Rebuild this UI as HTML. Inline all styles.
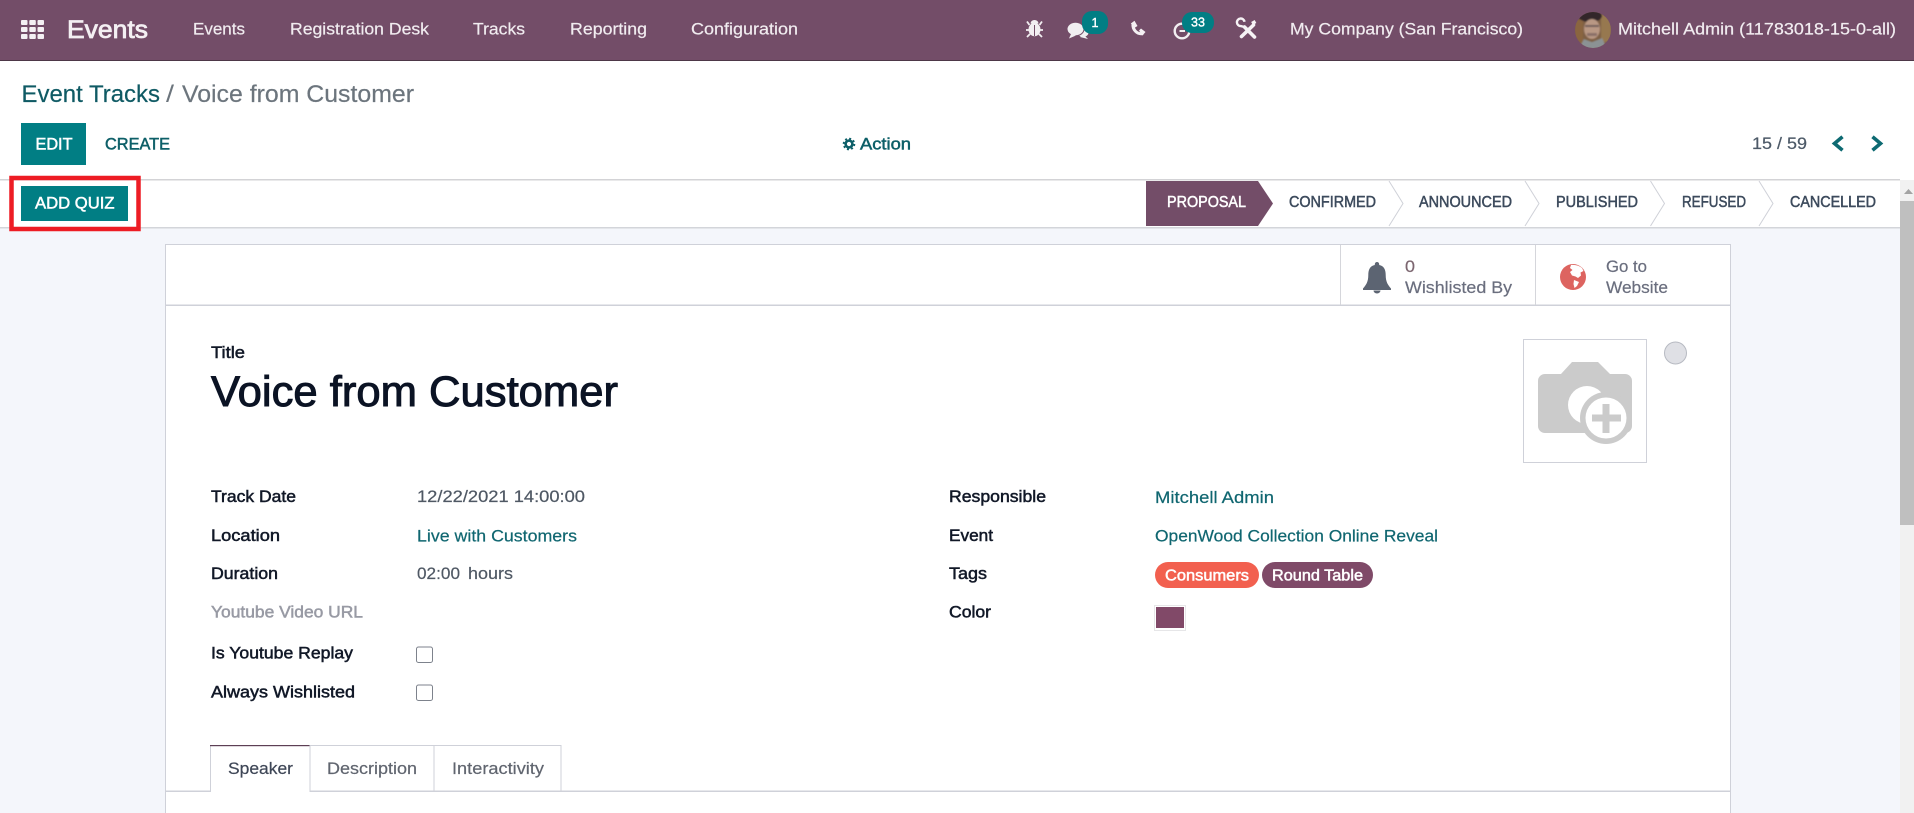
<!DOCTYPE html>
<html lang="en">
<head>
<meta charset="utf-8">
<title>Voice from Customer</title>
<style>
html,body{margin:0;padding:0;width:1914px;height:813px;overflow:hidden;background:#f4f6fb}
svg{display:block;position:absolute;left:0;top:0}
text{font-family:"Liberation Sans",Arial,sans-serif;font-size:16px;white-space:pre;paint-order:stroke}
.m{stroke-width:.5px}
.nav,.val,.lnk,.gr,.tab{stroke-width:.2px}
.nav{fill:#f1ecf0;stroke:#f1ecf0;font-size:16.5px}
.lb{fill:#111827;stroke:#111827;font-size:16.5px}
.val{fill:#4f5864;stroke:#4f5864;font-size:16.5px}
.lnk{fill:#0f6670;stroke:#0f6670;font-size:16.5px}
.st{fill:#3c4a5c;stroke:#3c4a5c;font-size:15.5px}
.gr{fill:#6a6e7e;stroke:#6a6e7e;font-size:17px}
.tab{fill:#60656f;stroke:#60656f;font-size:16.5px}
</style>
</head>
<body>
<svg width="1914" height="813" viewBox="0 0 1914 813" xmlns="http://www.w3.org/2000/svg">
<defs>
<clipPath id="av"><circle cx="1593" cy="30" r="18"/></clipPath>
<filter id="soft" x="-10%" y="-10%" width="120%" height="120%"><feGaussianBlur stdDeviation="0.9"/></filter>
</defs>
<!-- backgrounds -->
<rect x="0" y="0" width="1914" height="813" fill="#f4f6fb"/>
<rect x="0" y="61" width="1914" height="167" fill="#fff"/>
<rect x="0" y="0" width="1914" height="60" fill="#734d68"/>
<rect x="0" y="60" width="1914" height="1" fill="#4d3748"/>
<rect x="0" y="179" width="1900" height="1.5" fill="#d3d3d6"/>
<rect x="0" y="227" width="1900" height="1.5" fill="#d3d5da"/>

<!-- scrollbar -->
<rect x="1900" y="180" width="14" height="633" fill="#f1f1f1"/>
<rect x="1900" y="201" width="14" height="324" fill="#bfbfbf"/>
<path d="M1904 194 L1908.500 189 L1913 194 Z" fill="#a3a3a3"/>

<!-- navbar -->
<g fill="#f4f0f3">
<rect x="21" y="20" width="6.500" height="5" rx="1"/><rect x="29.300" y="20" width="6.500" height="5" rx="1"/><rect x="37.500" y="20" width="6.500" height="5" rx="1"/>
<rect x="21" y="27" width="6.500" height="5" rx="1"/><rect x="29.300" y="27" width="6.500" height="5" rx="1"/><rect x="37.500" y="27" width="6.500" height="5" rx="1"/>
<rect x="21" y="34" width="6.500" height="5" rx="1"/><rect x="29.300" y="34" width="6.500" height="5" rx="1"/><rect x="37.500" y="34" width="6.500" height="5" rx="1"/>
</g>
<text x="67" y="38" fill="#f4f0f3" stroke="#f4f0f3" stroke-width=".8" style="font-size:25px" textLength="81" lengthAdjust="spacingAndGlyphs">Events</text>
<text x="193" y="34.500" class="nav" textLength="52" lengthAdjust="spacingAndGlyphs">Events</text>
<text x="290" y="34.500" class="nav" textLength="139" lengthAdjust="spacingAndGlyphs">Registration Desk</text>
<text x="473" y="34.500" class="nav" textLength="52" lengthAdjust="spacingAndGlyphs">Tracks</text>
<text x="570" y="34.500" class="nav" textLength="77" lengthAdjust="spacingAndGlyphs">Reporting</text>
<text x="691" y="34.500" class="nav" textLength="107" lengthAdjust="spacingAndGlyphs">Configuration</text>

<!-- bug -->
<g fill="#f2eef1" stroke="#f2eef1">
<ellipse cx="1034.500" cy="29.500" rx="6" ry="6.800" stroke="none"/>
<path d="M1030.500 23.500 a4 3.500 0 0 1 8 0 Z" stroke="none"/>
<path d="M1029.500 25 L1027 21.500 M1039.500 25 L1042 21.500 M1029 30 H1026 M1040 30 H1043 M1030 34 L1027 37 M1039 34 L1042 37" stroke-width="1.800" fill="none"/>
<rect x="1034" y="25" width="1" height="11" fill="#734d68" stroke="none"/>
</g>
<!-- chat -->
<g fill="#f1eff1">
<ellipse cx="1083" cy="32.500" rx="5.500" ry="4.500"/>
<path d="M1084 35 L1088 39 L1080 37 Z"/>
<ellipse cx="1075.500" cy="29" rx="8.500" ry="6.800" stroke="#734d68" stroke-width="1"/>
<path d="M1071 34 L1069 38.500 L1076 35.500 Z"/>
</g>
<rect x="1082" y="11" width="26" height="23" rx="10" fill="#017e84"/>
<text x="1095" y="27" text-anchor="middle" fill="#fff" stroke="#fff" stroke-width=".4" style="font-size:12.500px">1</text>
<!-- phone -->
<path d="M1133 23.500 C1132.300 29.500 1137 34.800 1143 33.500" fill="none" stroke="#f4f0f3" stroke-width="3"/>
<path d="M1130.800 23.500 L1134.500 20.800 L1137.500 26 L1134.700 27.800 Z M1139 30.500 L1141 28.500 L1145.500 32 L1142.500 35.500 Z" fill="#f4f0f3"/>
<!-- activity clock -->
<circle cx="1182" cy="31" r="7.300" fill="none" stroke="#f2eef1" stroke-width="2.400"/>
<path d="M1179.500 31 H1185" stroke="#f2eef1" stroke-width="2"/>
<rect x="1182" y="12" width="32" height="21" rx="10" fill="#017e84"/>
<text x="1198" y="26.500" text-anchor="middle" fill="#fff" stroke="#fff" stroke-width=".4" style="font-size:12.500px">33</text>
<!-- tools -->
<g stroke="#f6f3f5" fill="none">
<path d="M1244.500 27 L1254.500 37" stroke-width="3.600" stroke-linecap="round"/>
<path d="M1253.500 25 L1241.500 36.500" stroke-width="3.600" stroke-linecap="round"/>
<path d="M1244.500 21.800 a3.800 3.800 0 1 0 -3.600 4.300 L1244.500 27" stroke-width="2.400"/>
<path d="M1252 23.500 L1255.500 21.500" stroke-width="3.400"/>
</g>
<text x="1290" y="34.500" class="nav" textLength="233" lengthAdjust="spacingAndGlyphs">My Company (San Francisco)</text>
<!-- avatar -->
<g clip-path="url(#av)">
<rect x="1575" y="12" width="36" height="36" fill="#7d5f45"/>
<g filter="url(#soft)">
<rect x="1601" y="14" width="10" height="28" fill="#97784f"/>
<rect x="1575" y="20" width="8" height="24" fill="#8a6541"/>
<ellipse cx="1590" cy="16" rx="12" ry="6" fill="#33262a"/>
<ellipse cx="1592" cy="29" rx="8" ry="10" fill="#b99884"/>
<rect x="1585" y="25" width="14" height="2" fill="#6d5a58"/>
<rect x="1587" y="33" width="10" height="3" fill="#8a6f68"/>
<path d="M1578 50 L1584 39 L1592 42 L1602 38 L1608 50 Z" fill="#8b9294"/>
</g>
</g>
<text x="1618" y="34.500" class="nav" textLength="278" lengthAdjust="spacingAndGlyphs">Mitchell Admin (11783018-15-0-all)</text>

<!-- breadcrumb -->
<text x="21.500" y="102" fill="#0f5a64" stroke="#0f5a64" stroke-width=".2" style="font-size:24px" textLength="138.500" lengthAdjust="spacingAndGlyphs">Event Tracks</text>
<text x="166" y="102" fill="#6c757d" style="font-size:24px" textLength="8" lengthAdjust="spacingAndGlyphs">/</text>
<text x="182" y="102" fill="#6c757d" stroke="#6c757d" stroke-width=".2" style="font-size:24px" textLength="232" lengthAdjust="spacingAndGlyphs">Voice from Customer</text>

<!-- control panel -->
<rect x="21" y="123" width="65" height="42" fill="#017e84"/>
<text x="35.500" y="149.500" fill="#fff" stroke="#fff" class="m" style="font-size:16.500px" textLength="37" lengthAdjust="spacingAndGlyphs">EDIT</text>
<text x="105" y="149.500" fill="#0d5f68" stroke="#0d5f68" class="m" style="font-size:16.500px" textLength="65" lengthAdjust="spacingAndGlyphs">CREATE</text>
<!-- gear -->
<circle cx="849" cy="144" r="3.400" fill="none" stroke="#0d5f68" stroke-width="2.600"/>
<circle cx="849" cy="144" r="5.400" fill="none" stroke="#0d5f68" stroke-width="1.800" stroke-dasharray="2 2.240"/>
<text x="860" y="149.500" fill="#0d5f68" stroke="#0d5f68" class="m" style="font-size:17px" textLength="51" lengthAdjust="spacingAndGlyphs">Action</text>
<text x="1752" y="149" fill="#4c5967" stroke="#4c5967" stroke-width=".2" style="font-size:16.500px" textLength="55" lengthAdjust="spacingAndGlyphs">15 / 59</text>
<path d="M1842.500 136.800 L1834.500 143.500 L1842.500 150.200" fill="none" stroke="#0d6a72" stroke-width="3.600"/>
<path d="M1872.500 136.800 L1880.500 143.500 L1872.500 150.200" fill="none" stroke="#0d6a72" stroke-width="3.600"/>

<!-- add quiz + red box -->
<rect x="21" y="186" width="107" height="35" fill="#017e84"/>
<text x="35" y="208.500" fill="#fff" stroke="#fff" class="m" style="font-size:16.500px" textLength="79.500" lengthAdjust="spacingAndGlyphs">ADD QUIZ</text>
<rect x="11.500" y="178" width="127" height="51" fill="none" stroke="#ed1c24" stroke-width="4.500"/>

<!-- statusbar -->
<path d="M1146 181 H1258 L1273 203.500 L1258 226 H1146 Z" fill="#734d68"/>
<text x="1167" y="207" fill="#fff" stroke="#fff" class="m" style="font-size:15.500px" textLength="79" lengthAdjust="spacingAndGlyphs">PROPOSAL</text>
<text x="1289" y="207" class="st m" textLength="87" lengthAdjust="spacingAndGlyphs">CONFIRMED</text>
<text x="1419" y="207" class="st m" textLength="93" lengthAdjust="spacingAndGlyphs">ANNOUNCED</text>
<text x="1556" y="207" class="st m" textLength="82" lengthAdjust="spacingAndGlyphs">PUBLISHED</text>
<text x="1682" y="207" class="st m" textLength="64" lengthAdjust="spacingAndGlyphs">REFUSED</text>
<text x="1790" y="207" class="st m" textLength="86" lengthAdjust="spacingAndGlyphs">CANCELLED</text>
<g fill="none" stroke="#cfd1d8" stroke-width="1">
<path d="M1389 181 L1403 203.500 L1389 226"/>
<path d="M1525 181 L1539 203.500 L1525 226"/>
<path d="M1650.500 181 L1664.500 203.500 L1650.500 226"/>
<path d="M1759 181 L1773 203.500 L1759 226"/>
</g>

<!-- sheet -->
<rect x="165.500" y="244.500" width="1565" height="580" fill="#fff" stroke="#cfd1d9" stroke-width="1"/>
<rect x="166" y="304.500" width="1564" height="1.500" fill="#cfd1d9"/>
<rect x="1340" y="245" width="1" height="60" fill="#d5d6db"/>
<rect x="1535" y="245" width="1" height="60" fill="#d5d6db"/>

<!-- bell -->
<path d="M1377 262 a2.200 2.200 0 0 1 2.200 2.200 v.8 c5 1 6.500 5 6.500 10 c0 7 2.300 10 5.300 13.500 v1.500 h-28 v-1.500 c3 -3.500 5.300 -6.500 5.300 -13.500 c0 -5 1.500 -9 6.500 -10 v-.8 a2.200 2.200 0 0 1 2.200 -2.200 Z" fill="#5c6472"/>
<path d="M1373.500 290.500 a3.500 3 0 0 0 7 0 Z" fill="#5c6472"/>
<text x="1405" y="272" fill="#7c6670" stroke="#7c6670" stroke-width=".2" style="font-size:17px" textLength="10" lengthAdjust="spacingAndGlyphs">0</text>
<text x="1405" y="293" class="gr" textLength="107" lengthAdjust="spacingAndGlyphs">Wishlisted By</text>
<!-- globe -->
<circle cx="1573" cy="277" r="13" fill="#dd6460"/>
<path d="M1571 265 C1575 264.500 1579 265.500 1582 268 L1583.500 271 L1580.500 272.500 L1581 275.500 L1578 278 L1575.500 276.500 L1572 275.500 L1570 272 L1572.500 270 L1570 268 Z" fill="#fff"/>
<path d="M1574 280 L1579 282 L1577 286 L1574.500 288 L1573.500 284 Z" fill="#fff"/>
<text x="1606" y="272" class="gr" textLength="41" lengthAdjust="spacingAndGlyphs">Go to</text>
<text x="1606" y="293" class="gr" textLength="62" lengthAdjust="spacingAndGlyphs">Website</text>

<!-- image placeholder -->
<rect x="1523.500" y="339.500" width="123" height="123" fill="#fff" stroke="#cfd1d9"/>
<path d="M1545 374 H1561 L1572 362 H1598 L1610 374 H1625 a7 7 0 0 1 7 7 V426 a7 7 0 0 1 -7 7 H1545 a7 7 0 0 1 -7 -7 V381 a7 7 0 0 1 7 -7 Z" fill="#cbcbcb"/>
<circle cx="1587" cy="405" r="19" fill="#fff"/>
<circle cx="1606" cy="418" r="26" fill="#cbcbcb"/>
<circle cx="1606" cy="418" r="20.500" fill="#fff"/>
<path d="M1592 414.500 H1602.500 V404 H1609.500 V414.500 H1621 V421.500 H1609.500 V433 H1602.500 V421.500 H1592 Z" fill="#cbcbcb"/>
<!-- color dot -->
<circle cx="1675.500" cy="353" r="11" fill="#dfe0e5" stroke="#b7bac2" stroke-width="1"/>

<!-- title -->
<text x="211" y="358" class="lb m" style="font-size:17px" textLength="34" lengthAdjust="spacingAndGlyphs">Title</text>
<text x="211" y="406" fill="#0b1324" stroke="#0b1324" stroke-width="1" style="font-size:43px" textLength="407" lengthAdjust="spacingAndGlyphs">Voice from Customer</text>

<!-- left fields -->
<text x="211" y="502" class="lb m" textLength="85" lengthAdjust="spacingAndGlyphs">Track Date</text>
<text x="211" y="541" class="lb m" textLength="69" lengthAdjust="spacingAndGlyphs">Location</text>
<text x="211" y="579" class="lb m" textLength="67" lengthAdjust="spacingAndGlyphs">Duration</text>
<text x="211" y="617.500" class="m" fill="#989aa4" stroke="#989aa4" style="font-size:16.500px" textLength="152" lengthAdjust="spacingAndGlyphs">Youtube Video URL</text>
<text x="211" y="658.500" class="lb m" textLength="142" lengthAdjust="spacingAndGlyphs">Is Youtube Replay</text>
<text x="211" y="697.500" class="lb m" textLength="144" lengthAdjust="spacingAndGlyphs">Always Wishlisted</text>

<text x="417" y="502" class="val" textLength="168" lengthAdjust="spacingAndGlyphs">12/22/2021 14:00:00</text>
<text x="417" y="541.500" class="lnk" textLength="160" lengthAdjust="spacingAndGlyphs">Live with Customers</text>
<text x="417" y="579" class="val" textLength="43" lengthAdjust="spacingAndGlyphs">02:00</text>
<text x="468" y="579" class="val" textLength="45" lengthAdjust="spacingAndGlyphs">hours</text>
<rect x="416.500" y="647" width="16" height="15.500" rx="2" fill="#fff" stroke="#7d828c"/>
<rect x="416.500" y="685" width="16" height="15.500" rx="2" fill="#fff" stroke="#7d828c"/>

<!-- right fields -->
<text x="949" y="502" class="lb m" textLength="97" lengthAdjust="spacingAndGlyphs">Responsible</text>
<text x="949" y="541" class="lb m" textLength="44" lengthAdjust="spacingAndGlyphs">Event</text>
<text x="949" y="579" class="lb m" textLength="38" lengthAdjust="spacingAndGlyphs">Tags</text>
<text x="949" y="617.500" class="lb m" textLength="42" lengthAdjust="spacingAndGlyphs">Color</text>
<text x="1155" y="503" class="lnk" textLength="119" lengthAdjust="spacingAndGlyphs">Mitchell Admin</text>
<text x="1155" y="541.500" class="lnk" textLength="283" lengthAdjust="spacingAndGlyphs">OpenWood Collection Online Reveal</text>
<rect x="1155" y="562" width="104" height="26" rx="13" fill="#f2604f"/>
<text x="1165" y="580.500" fill="#fff" stroke="#fff" class="m" style="font-size:15.500px" textLength="84" lengthAdjust="spacingAndGlyphs">Consumers</text>
<rect x="1262" y="562" width="111" height="26" rx="13" fill="#7f4a68"/>
<text x="1272" y="580.500" fill="#fff" stroke="#fff" class="m" style="font-size:15.500px" textLength="91" lengthAdjust="spacingAndGlyphs">Round Table</text>
<rect x="1154.500" y="605.500" width="31" height="25" fill="#fff" stroke="#e6e6e8"/>
<rect x="1156" y="607" width="28" height="21" fill="#814968"/>

<!-- tabs -->
<rect x="166" y="790.500" width="1564" height="1.500" fill="#cfd1d9"/>
<path d="M210.500 791 V745.500 H310 V791" fill="#fff" stroke="#cfd1d9"/>
<rect x="211" y="791" width="98.500" height="2" fill="#fff"/>
<rect x="210" y="745" width="100" height="1.200" fill="#5d3f55"/>
<path d="M310 791 V745.500 H434 V791 M434 745.500 H561 V791" fill="none" stroke="#cfd1d9"/>
<text x="228" y="774" fill="#3e4656" stroke="#3e4656" stroke-width=".2" style="font-size:16.500px" textLength="65" lengthAdjust="spacingAndGlyphs">Speaker</text>
<text x="327" y="774" class="tab" textLength="90" lengthAdjust="spacingAndGlyphs">Description</text>
<text x="452" y="774" class="tab" textLength="92" lengthAdjust="spacingAndGlyphs">Interactivity</text>
</svg>
</body>
</html>
